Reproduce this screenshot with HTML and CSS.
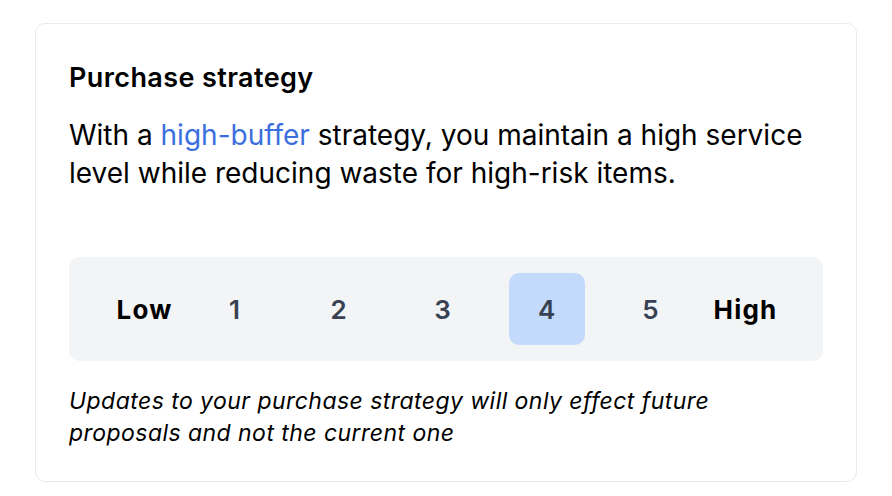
FILE: index.html
```html
<!DOCTYPE html>
<html lang="en">
<head>
<meta charset="utf-8">
<link rel="stylesheet" href="styles.css">
</head>
<body>
<div class="page">
  <section class="card">
    <h2 class="title">Purchase strategy</h2>
    <p class="desc">With a <span class="accent">high-buffer</span> strategy, you maintain a high service level while reducing waste for high-risk items.</p>
    <div class="scale">
      <span class="end end-low">Low</span>
      <button class="opt">1</button>
      <button class="opt">2</button>
      <button class="opt">3</button>
      <button class="opt selected">4</button>
      <button class="opt">5</button>
      <span class="end end-high">High</span>
    </div>
    <p class="note">Updates to your purchase strategy will only effect future proposals and not the current one</p>
  </section>
</div>
</body>
</html>
```
FILE: styles.css
```css
* { box-sizing: border-box; }
html, body { margin: 0; background: #ffffff; }
body { font-family: Inter, "Noto Sans", sans-serif; color: #000; }
.page { padding: 23px 35px 0 35px; }
.card {
  width: 822px;
  height: 459px;
  border: 1px solid #e8eaf0;
  border-radius: 10px;
  padding: 38px 33px 30px 33px;
  background: #fff;
}
.title {
  margin: 0;
  font-size: 27px;
  line-height: 32px;
  font-weight: 600;
  letter-spacing: 0.4px;
}
.desc {
  margin: 22px 0 0 0;
  font-size: 28px;
  line-height: 38px;
  font-weight: 400;
}
.accent { color: #3b6fe0; }
.scale {
  margin-top: 65px;
  height: 104px;
  background: #f3f4f6;
  border-radius: 10px;
  display: flex;
  align-items: center;
  justify-content: center;
  gap: 28px;
}
.end {
  font-size: 26px;
  font-weight: 700;
  letter-spacing: 1.2px;
  color: #000;
}
.end-low { margin-right: -4px; }
.end-high { margin-left: -3px; margin-right: -2px; }
.opt {
  width: 76px;
  height: 72px;
  border: 0;
  border-radius: 10px;
  background: transparent;
  font-family: inherit;
  font-size: 26px;
  font-weight: 600;
  color: #374151;
  padding: 0;
}
.opt.selected { background: #c3dafc; }
.note {
  margin: 24px 0 0 0;
  font-size: 23px;
  line-height: 32px;
  font-style: italic;
  letter-spacing: 0.45px;
}
```
